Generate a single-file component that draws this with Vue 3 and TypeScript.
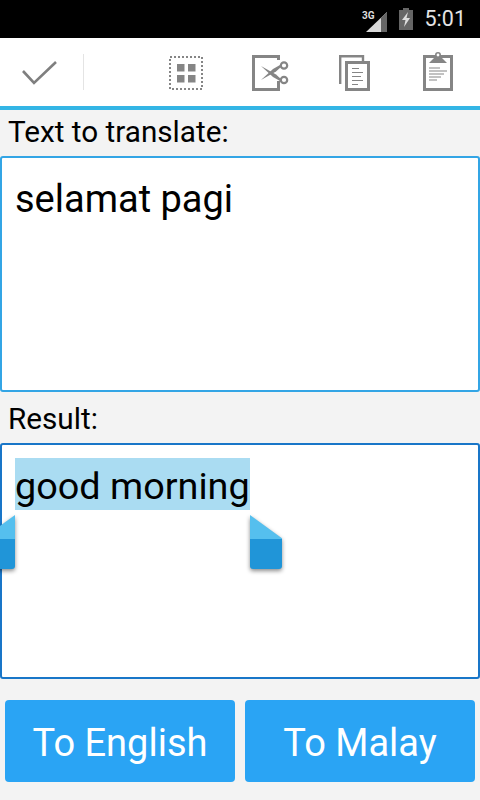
<template>
  <div class="screen">
    <div class="status-bar">
      <svg class="signal" width="28" height="30" viewBox="0 0 28 30">
        <text x="1" y="15" class="net">3G</text>
        <path d="M5 28 L26 8 V28 Z" fill="#d8d8d8" />
        <path d="M20 13.7 L26 8 V28 H20 Z" fill="#666" />
      </svg>
      <svg class="battery" width="14" height="22" viewBox="0 0 14 22">
        <path d="M4 0 H10 V2 H14 V22 H0 V2 H4 Z" fill="#666" />
        <path d="M9 4 L3 12 H6.5 L5 19 L11 10 H7.5 Z" fill="#ddd" />
      </svg>
      <span class="clock">5:01</span>
    </div>

    <div class="action-bar">
      <div class="done">
        <svg width="36" height="26" viewBox="0 0 36 26">
          <path d="M1 10 L12 22 L34 1" fill="none" stroke="#7f7f7f" stroke-width="2.6" />
        </svg>
      </div>
      <div class="tools">
        <svg class="icon-select" width="36" height="36" viewBox="0 0 36 36">
          <rect x="2" y="2" width="32" height="32" fill="none" stroke="#858585" stroke-width="2" stroke-dasharray="2 2" />
          <rect x="9" y="9" width="7.5" height="7.5" fill="#858585" />
          <rect x="20" y="9" width="7.5" height="7.5" fill="#858585" />
          <rect x="9" y="20" width="7.5" height="7.5" fill="#858585" />
          <rect x="20" y="20" width="7.5" height="7.5" fill="#858585" />
        </svg>
        <svg class="icon-cut" width="37" height="36" viewBox="0 0 37 36">
          <path d="M26.5 5 V1.5 H1.5 V34.5 H26.5 V26" fill="none" stroke="#858585" stroke-width="3" />
          <path d="M9 11 L24 19.5 L29 24 L28 26 L21 22 Z" fill="#858585" />
          <path d="M9 25 L24 16.5 L29 12 L28 10 L21 14 Z" fill="#858585" />
          <circle cx="32" cy="10.5" r="3.2" fill="#fff" stroke="#858585" stroke-width="2.2" />
          <circle cx="32" cy="25" r="3.2" fill="#fff" stroke="#858585" stroke-width="2.2" />
        </svg>
        <svg class="icon-copy" width="31" height="36" viewBox="0 0 31 36">
          <path d="M1.2 29 V1.2 H24 V6" fill="none" stroke="#858585" stroke-width="2.4" />
          <rect x="7.5" y="7.5" width="22" height="27" fill="#fff" stroke="#858585" stroke-width="3" />
          <path d="M13 13.5 H20 M13 17.5 H24 M13 21.5 H22 M13 25.5 H24 M13 29.5 H19" stroke="#858585" stroke-width="1.2" />
        </svg>
        <svg class="icon-paste" width="31" height="39" viewBox="0 0 31 39">
          <rect x="1.5" y="4.5" width="27" height="33" fill="#fff" stroke="#858585" stroke-width="3" />
          <circle cx="15" cy="3" r="2.2" fill="#fff" stroke="#858585" stroke-width="1.6" />
          <path d="M6 11 L12 5 H18 L24 11 Z" fill="#858585" />
          <path d="M6 16 H17 M6 19 H24 M6 22 H21 M6 25 H18 M6 28 H14" stroke="#858585" stroke-width="1.2" />
        </svg>
      </div>
    </div>

    <div class="content">
      <div class="label">Text to translate:</div>
      <div class="box box-first">selamat pagi</div>

      <div class="label label-result">Result:</div>
      <div class="box box-second">
        <div class="selected">good morning</div>
        <div class="handle handle-left"></div>
        <div class="handle handle-right"></div>
      </div>

      <div class="buttons">
        <button class="btn">To English</button>
        <button class="btn">To Malay</button>
      </div>
    </div>
  </div>
</template>

<script setup lang="ts">
</script>

<style>
html,
body {
  margin: 0;
  background: #f3f3f3;
}
</style>

<style scoped>
.screen {
  width: 480px;
  height: 800px;
  overflow: hidden;
  background: #f3f3f3;
  font-family: Roboto, "Liberation Sans", sans-serif;
  color: #000;
}

.status-bar {
  height: 38px;
  background: #000;
  display: flex;
  align-items: center;
  justify-content: flex-end;
  padding-right: 14px;
  box-sizing: border-box;
}

.signal {
  margin-right: 10px;
}

.net {
  font-size: 10px;
  font-weight: 700;
  fill: #ddd;
}

.battery {
  margin-right: 12px;
}

.clock {
  color: #e4e4e4;
  font-size: 21.5px;
  line-height: 1;
}

.action-bar {
  height: 68px;
  background: #fff;
  border-bottom: 4px solid #33b5e5;
  display: flex;
  align-items: center;
}

.done {
  width: 84px;
  height: 36px;
  box-sizing: border-box;
  padding: 7px 0 0 22px;
  border-right: 1px solid #e4e4e4;
}

.tools {
  flex: 1;
  display: flex;
  align-items: flex-end;
  height: 36px;
  margin-top: 2px;
}

.icon-select {
  margin-left: 84px;
}

.icon-cut {
  margin-left: 48px;
}

.icon-copy {
  margin-left: 50px;
}

.icon-paste {
  margin-left: 53px;
}

.content {
  display: flex;
  flex-direction: column;
}

.label {
  height: 46px;
  padding-left: 8px;
  font-size: 29.7px;
  line-height: 44px;
}

.label-result {
  height: 51px;
  line-height: 54px;
}

.box {
  position: relative;
  height: 236px;
  box-sizing: border-box;
  background: #fff;
  border: 2px solid #33a5e5;
  border-radius: 3px;
  padding: 13px;
  font-size: 38px;
  line-height: 52px;
}

.box-first {
  padding-top: 15px;
}

.box-second {
  border-color: #1976c8;
}

.selected {
  width: fit-content;
  background: #aadcf2;
  font-size: 37.8px;
  line-height: 48px;
  padding-top: 4px;
}

.handle {
  position: absolute;
  top: 70px;
  width: 32px;
  height: 54px;
  filter: drop-shadow(0 2px 2px rgba(0, 0, 0, 0.45));
}

.handle::before {
  content: "";
  display: block;
  width: 100%;
  height: 100%;
  background: linear-gradient(#55bfee 0 45%, #2095d8 45% 100%);
  border-radius: 0 0 3px 3px;
}

.handle-left {
  left: -19px;
}

.handle-left::before {
  clip-path: polygon(100% 0, 100% 100%, 0 100%, 0 43%);
}

.handle-right {
  left: 248px;
}

.handle-right::before {
  clip-path: polygon(0 0, 100% 43%, 100% 100%, 0 100%);
}

.buttons {
  display: flex;
  gap: 10px;
  padding: 21px 5px 0;
}

.btn {
  flex: 1;
  height: 82px;
  border: none;
  border-radius: 4px;
  background: #2aa4f4;
  color: #fff;
  font-family: inherit;
  font-size: 38px;
  padding: 3px 0 0;
}
</style>
